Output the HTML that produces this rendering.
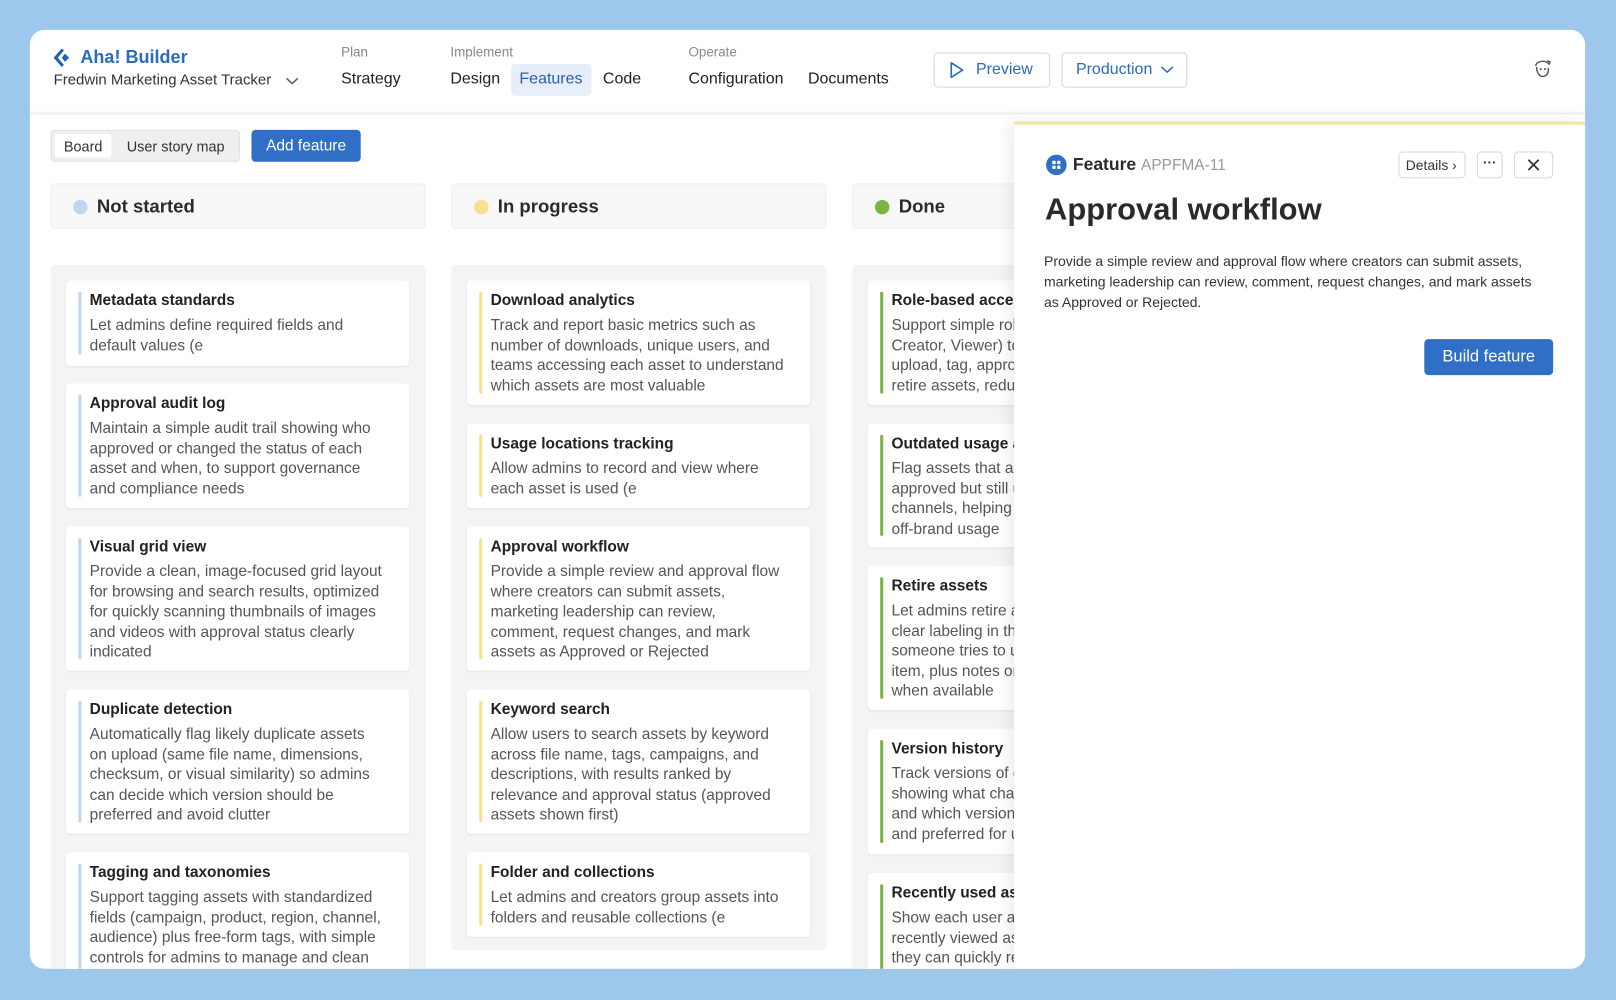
<!DOCTYPE html>
<html><head><meta charset="utf-8"><style>
*{box-sizing:border-box;margin:0;padding:0}
html,body{width:1616px;height:1000px;overflow:hidden;background:#9dc8eb;font-family:"Liberation Sans",sans-serif}
#s{position:absolute;left:0;top:0;width:1568px;height:970px;transform:scale(1.030612);transform-origin:0 0}
.a{position:absolute}
.panel{left:29px;top:29px;width:1509px;height:911px;background:#fff;border-radius:14px;overflow:hidden}
#in{position:absolute;left:-29px;top:-29px;width:1568px;height:970px}
.lbl{font-size:13px;color:#888;top:43px}
.nav{font-size:15.5px;color:#222;top:68px}
.btn{border:1px solid #d8d8d8;border-radius:4px;background:#fff}
.colh{height:44px;width:364px;top:178px;background:#f8f8f8;border:1px solid #eee;border-radius:4px;font-size:18px;font-weight:bold;color:#2a2a2a}
.colh span.d{position:absolute;left:21px;top:15px;width:14px;height:14px;border-radius:50%}
.colh span.t{position:absolute;left:44px;top:11px}
.colb{top:257px;width:364px;height:700px;background:#f4f4f4;border-radius:4px}
.card{position:absolute;left:15px;width:333px;background:#fff;border-radius:4px;box-shadow:0 1px 2px rgba(0,0,0,.06)}
.card .bar{position:absolute;left:12px;top:11px;bottom:11px;width:3px;border-radius:2px}
.card .ti{position:absolute;left:23px;top:11px;font-size:15px;font-weight:bold;color:#222;white-space:nowrap}
.card .de{position:absolute;left:23px;top:34px;font-size:15px;line-height:19.5px;color:#555;white-space:nowrap}
</style></head><body><div id="s">
<div class="a panel"><div id="in">
<!-- header -->
<svg class="a" style="left:51px;top:46px" width="20" height="20" viewBox="0 0 20 20"><path d="M9 1 L1 10 L9 19 L11 17 L5 10 L11 3Z" fill="#1e5fb4"/><path d="M12 6 L16 10 L12 14 L9 10Z" fill="#1e5fb4"/></svg>
<div class="a" style="left:78px;top:45px;font-size:17.5px;font-weight:bold;color:#2a6bbf">Aha! Builder</div>
<div class="a" style="left:52px;top:70px;font-size:14.5px;color:#333">Fredwin Marketing Asset Tracker</div>
<svg class="a" style="left:277px;top:74px" width="13" height="9"><path d="M1 2l5.5 5 5.5-5" stroke="#555" stroke-width="1.4" fill="none"/></svg>
<div class="a lbl" style="left:331px">Plan</div>
<div class="a lbl" style="left:437px">Implement</div>
<div class="a lbl" style="left:668px">Operate</div>
<div class="a" style="left:496px;top:62px;width:78px;height:31px;background:#e5eef9;border-radius:4px"></div>
<div class="a nav" style="left:331px">Strategy</div>
<div class="a nav" style="left:437px">Design</div>
<div class="a nav" style="left:504px;color:#2a5ea8">Features</div>
<div class="a nav" style="left:585px">Code</div>
<div class="a nav" style="left:668px">Configuration</div>
<div class="a nav" style="left:784px">Documents</div>
<div class="a btn" style="left:906px;top:51px;width:113px;height:34px"></div>
<svg class="a" style="left:920px;top:59px" width="16" height="18"><path d="M3 2 L14 9 L3 16Z" stroke="#2a6bbf" stroke-width="1.6" fill="none" stroke-linejoin="round"/></svg>
<div class="a" style="left:947px;top:59px;font-size:15.5px;color:#2a6bbf">Preview</div>
<div class="a btn" style="left:1030px;top:51px;width:122px;height:34px"></div>
<div class="a" style="left:1044px;top:59px;font-size:15.5px;color:#2a6bbf">Production</div>
<svg class="a" style="left:1126px;top:63px" width="13" height="9"><path d="M1 2l5.5 5 5.5-5" stroke="#2a6bbf" stroke-width="1.5" fill="none"/></svg>
<svg class="a" style="left:1486px;top:56px" width="22" height="22" viewBox="0 0 22 22"><path d="M4 8 C5 3 13 2 17 6 M15 3 l3 1 -1 3 M5 9 C5 15 8 19 12 18 C16 17 17 13 16 10" stroke="#555" stroke-width="1.4" fill="none"/><circle cx="9" cy="11" r="1" fill="#555"/><circle cx="13" cy="11" r="1" fill="#555"/></svg>
<div class="a" style="left:29px;top:109px;width:1509px;height:2px;background:#eee;box-shadow:0 -3px 6px rgba(0,0,0,.04)"></div>
<!-- toolbar -->
<div class="a" style="left:49px;top:126px;width:184px;height:31px;background:#efefef;border:1px solid #e0e0e0;border-radius:4px"></div>
<div class="a" style="left:53px;top:130px;width:55px;height:23px;background:#fff;border-radius:3px"></div>
<div class="a" style="left:62px;top:134px;font-size:14px;color:#333">Board</div>
<div class="a" style="left:123px;top:134px;font-size:14px;color:#333">User story map</div>
<div class="a" style="left:244px;top:126px;width:106px;height:31px;background:#2f6fc6;border-radius:4px;color:#fff;font-size:15px;text-align:center;line-height:31px">Add feature</div>
<!-- columns -->
<div class="a colh" style="left:49px"><span class="d" style="background:#bcd6f3"></span><span class="t">Not started</span></div>
<div class="a colh" style="left:438px"><span class="d" style="background:#f7e08e"></span><span class="t">In progress</span></div>
<div class="a colh" style="left:827px"><span class="d" style="background:#79b545"></span><span class="t">Done</span></div>

<div class="a colb" style="left:49px;height:690px">
<div class="card" style="top:15px;height:83px"><div class="bar" style="background:#bcd6f3"></div><div class="ti">Metadata standards</div><div class="de">Let admins define required fields and<br>default values (e</div></div>
<div class="card" style="top:115px;height:121px"><div class="bar" style="background:#bcd6f3"></div><div class="ti">Approval audit log</div><div class="de">Maintain a simple audit trail showing who<br>approved or changed the status of each<br>asset and when, to support governance<br>and compliance needs</div></div>
<div class="card" style="top:254px;height:140px"><div class="bar" style="background:#bcd6f3"></div><div class="ti">Visual grid view</div><div class="de">Provide a clean, image-focused grid layout<br>for browsing and search results, optimized<br>for quickly scanning thumbnails of images<br>and videos with approval status clearly<br>indicated</div></div>
<div class="card" style="top:412px;height:140px"><div class="bar" style="background:#bcd6f3"></div><div class="ti">Duplicate detection</div><div class="de">Automatically flag likely duplicate assets<br>on upload (same file name, dimensions,<br>checksum, or visual similarity) so admins<br>can decide which version should be<br>preferred and avoid clutter</div></div>
<div class="card" style="top:570px;height:140px"><div class="bar" style="background:#bcd6f3"></div><div class="ti">Tagging and taxonomies</div><div class="de">Support tagging assets with standardized<br>fields (campaign, product, region, channel,<br>audience) plus free-form tags, with simple<br>controls for admins to manage and clean</div></div>
</div>
<div class="a colb" style="left:438px;height:665px">
<div class="card" style="top:15px;height:121px"><div class="bar" style="background:#f7e08e"></div><div class="ti">Download analytics</div><div class="de">Track and report basic metrics such as<br>number of downloads, unique users, and<br>teams accessing each asset to understand<br>which assets are most valuable</div></div>
<div class="card" style="top:154px;height:82px"><div class="bar" style="background:#f7e08e"></div><div class="ti">Usage locations tracking</div><div class="de">Allow admins to record and view where<br>each asset is used (e</div></div>
<div class="card" style="top:254px;height:140px"><div class="bar" style="background:#f7e08e"></div><div class="ti">Approval workflow</div><div class="de">Provide a simple review and approval flow<br>where creators can submit assets,<br>marketing leadership can review,<br>comment, request changes, and mark<br>assets as Approved or Rejected</div></div>
<div class="card" style="top:412px;height:140px"><div class="bar" style="background:#f7e08e"></div><div class="ti">Keyword search</div><div class="de">Allow users to search assets by keyword<br>across file name, tags, campaigns, and<br>descriptions, with results ranked by<br>relevance and approval status (approved<br>assets shown first)</div></div>
<div class="card" style="top:570px;height:82px"><div class="bar" style="background:#f7e08e"></div><div class="ti">Folder and collections</div><div class="de">Let admins and creators group assets into<br>folders and reusable collections (e</div></div>
</div>
<div class="a colb" style="left:827px;height:690px">
<div class="card" style="top:15px;height:121px"><div class="bar" style="background:#79b545"></div><div class="ti">Role-based access</div><div class="de">Support simple roles (Admin,<br>Creator, Viewer) to control who can<br>upload, tag, approve, and<br>retire assets, reducing</div></div>
<div class="card" style="top:154px;height:120px"><div class="bar" style="background:#79b545"></div><div class="ti">Outdated usage alerts</div><div class="de">Flag assets that are<br>approved but still used in<br>channels, helping prevent<br>off-brand usage</div></div>
<div class="card" style="top:292px;height:140px"><div class="bar" style="background:#79b545"></div><div class="ti">Retire assets</div><div class="de">Let admins retire assets with<br>clear labeling in the library if<br>someone tries to use a retired<br>item, plus notes on alternatives<br>when available</div></div>
<div class="card" style="top:450px;height:122px"><div class="bar" style="background:#79b545"></div><div class="ti">Version history</div><div class="de">Track versions of each asset,<br>showing what changed<br>and which version is current<br>and preferred for use</div></div>
<div class="card" style="top:590px;height:120px"><div class="bar" style="background:#79b545"></div><div class="ti">Recently used assets</div><div class="de">Show each user a list of<br>recently viewed assets so<br>they can quickly return</div></div>
</div>
<!-- drawer -->
<div class="a" style="left:984px;top:118px;width:554px;height:822px;background:#fff;border-top:3px solid #f6e3a0;box-shadow:-6px 0 14px rgba(0,0,0,.07)"></div>
<svg class="a" style="left:1015px;top:150px" width="20" height="20"><circle cx="10" cy="10" r="10" fill="#2f6fc6"/><rect x="6" y="6" width="3.3" height="3.3" rx=".8" fill="#fff"/><rect x="10.7" y="6" width="3.3" height="3.3" rx=".8" fill="#fff"/><rect x="6" y="10.7" width="3.3" height="3.3" rx=".8" fill="#fff"/><rect x="10.7" y="10.7" width="3.3" height="3.3" rx=".8" fill="#fff"/></svg>
<div class="a" style="left:1041px;top:150px;font-size:17px;font-weight:bold;color:#2a2a2a">Feature <span style="font-weight:normal;color:#999;font-size:15px">APPFMA-11</span></div>
<div class="a btn" style="left:1357px;top:147px;width:65px;height:26px;font-size:13.5px;color:#333;padding:5px 0 0 6px">Details &#8250;</div>
<div class="a btn" style="left:1433px;top:147px;width:25px;height:26px;font-size:13px;color:#333;text-align:center;line-height:20px;font-weight:bold">···</div>
<div class="a btn" style="left:1469px;top:147px;width:38px;height:26px"></div>
<svg class="a" style="left:1481px;top:153px" width="14" height="14"><path d="M2 2l10 10M12 2L2 12" stroke="#333" stroke-width="1.7"/></svg>
<div class="a" style="left:1014px;top:187px;font-size:30px;font-weight:bold;color:#2a2a2a">Approval workflow</div>
<div class="a" style="left:1013px;top:244px;font-size:13.6px;line-height:20px;color:#333;white-space:nowrap">Provide a simple review and approval flow where creators can submit assets,<br>marketing leadership can review, comment, request changes, and mark assets<br>as Approved or Rejected.</div>
<div class="a" style="left:1382px;top:329px;width:125px;height:35px;background:#2f6fc6;border-radius:4px;color:#fff;font-size:16px;text-align:center;line-height:35px">Build feature</div>
</div></div>
</div></body></html>
